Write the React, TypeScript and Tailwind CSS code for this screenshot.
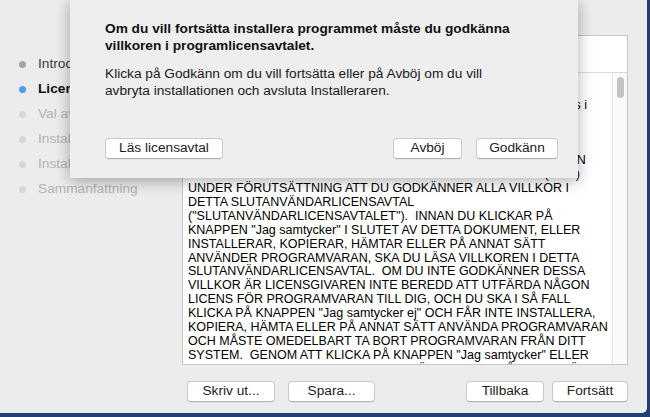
import React from "react";

const steps = [
  {label: "Introduktion", state: "done"},
  {label: "Licens", state: "current"},
  {label: "Val av målskiva", state: "todo"},
  {label: "Installationstyp", state: "todo"},
  {label: "Installation", state: "todo"},
  {label: "Sammanfattning", state: "todo"},
];

const licenseLines = [
  "SVENSKA",
  "",
  "LICENSGIVAREN GER DIG LICENS PÅ PROGRAMVARAN som finns i",
  "DETTA PAKET ENLIGT VILLKOREN I DETTA AVTAL.",
  "PROGRAMVARAN OMFATTAR ÄVEN TILLHÖRANDE",
  "TYPSNITT, BILDER, LJUD OCH ANNAT MATERIAL",
  "OCH DOKUMENTATIONEN. LICENSEN UPPLÅTS ENBART TILL DEN",
  'PERSON ELLER ENHET SOM ERHÅLLER PROGRAMVARAN ("DU")',
  "UNDER FÖRUTSÄTTNING ATT DU GODKÄNNER ALLA VILLKOR I",
  "DETTA SLUTANVÄNDARLICENSAVTAL",
  '("SLUTANVÄNDARLICENSAVTALET").  INNAN DU KLICKAR PÅ',
  'KNAPPEN "Jag samtycker" I SLUTET AV DETTA DOKUMENT, ELLER',
  "INSTALLERAR, KOPIERAR, HÄMTAR ELLER PÅ ANNAT SÄTT",
  "ANVÄNDER PROGRAMVARAN, SKA DU LÄSA VILLKOREN I DETTA",
  "SLUTANVÄNDARLICENSAVTAL.  OM DU INTE GODKÄNNER DESSA",
  "VILLKOR ÄR LICENSGIVAREN INTE BEREDD ATT UTFÄRDA NÅGON",
  "LICENS FÖR PROGRAMVARAN TILL DIG, OCH DU SKA I SÅ FALL",
  'KLICKA PÅ KNAPPEN "Jag samtycker ej" OCH FÅR INTE INSTALLERA,',
  "KOPIERA, HÄMTA ELLER PÅ ANNAT SÄTT ANVÄNDA PROGRAMVARAN",
  "OCH MÅSTE OMEDELBART TA BORT PROGRAMVARAN FRÅN DITT",
  'SYSTEM.  GENOM ATT KLICKA PÅ KNAPPEN "Jag samtycker" ELLER',
  "GENOM ATT INSTALLERA, KOPIERA, HÄMTA ELLER PÅ ANNAT SÄTT",
];

function MacButton({label, className = ""}: {label: string; className?: string}) {
  return (
    <button
      type="button"
      className={`flex h-[21px] items-center justify-center rounded-[4px] border border-[#c9c9c9] border-b-[#b4b4b4] bg-white text-[13.7px] text-[#222] shadow-[0_1px_0_rgba(0,0,0,0.04)] ${className}`}>
      {label}
    </button>
  );
}

export default function App() {
  return (
    <div className="h-[417px] w-[650px] overflow-hidden bg-[#213f6f] font-['Liberation_Sans',Arial,sans-serif]">
      <div className="relative flex h-[413px] w-[647px] flex-col rounded-br-[5px] bg-[#ececec]">
        {/* ── Window body ─────────────────────────────────────────── */}
        <div className="flex pt-[35px]">
          <aside className="flex w-[182px] flex-col pl-[19px] pt-[17px]">
            {steps.map((s) => (
              <div key={s.label} className="flex h-[25px] items-center gap-[12px]">
                <span
                  className={
                    s.state === "done"
                      ? "h-[7px] w-[7px] rounded-full bg-[#a5a5a5]"
                      : s.state === "current"
                        ? "h-[7px] w-[7px] rounded-full bg-[#4b9ff0]"
                        : "h-[7px] w-[7px] rounded-full bg-[#d6d6d6]"
                  }
                />
                <span
                  className={
                    s.state === "done"
                      ? "text-[13.7px] text-[#3c3c3c]"
                      : s.state === "current"
                        ? "text-[13.7px] font-bold text-[#111]"
                        : "text-[13.7px] text-[#b3b3b3]"
                  }>
                  {s.label}
                </span>
              </div>
            ))}
          </aside>

          <section className="flex h-[330px] w-[446px] flex-col border border-[#c6c6c6] bg-white">
            <div className="h-[37px] shrink-0 border-b border-[#dadada]" />
            <div className="flex min-h-0 flex-1">
              <div className="flex-1 overflow-hidden pl-[5px]">
                <div className="-mt-[2px] text-[12.5px] leading-[13.9px] text-black">
                  {licenseLines.map((line, i) => (
                    <div key={i} className="h-[13.9px] whitespace-pre">
                      {line}
                    </div>
                  ))}
                </div>
              </div>
              <div className="flex w-[15px] shrink-0 justify-center border-l border-[#e4e4e4] bg-[#fafafa] pt-[4px]">
                <div className="h-[21px] w-[7px] rounded-full bg-[#c3c3c3]" />
              </div>
            </div>
          </section>
        </div>

        {/* ── Bottom buttons ──────────────────────────────────────── */}
        <footer className="mt-[16px] flex items-center pl-[187px] pr-[19px]">
          <MacButton label="Skriv ut..." className="w-[88px]" />
          <MacButton label="Spara..." className="ml-[13px] w-[87px]" />
          <div className="flex-1" />
          <MacButton label="Tillbaka" className="w-[78px]" />
          <MacButton label="Fortsätt" className="ml-[8px] w-[76px]" />
        </footer>

        {/* ── Sheet ───────────────────────────────────────────────── */}
        <div className="absolute left-[70px] top-0 flex h-[178px] w-[508px] flex-col bg-[#eeeeee] px-[35px] pt-[20px] shadow-[0_3px_14px_rgba(0,0,0,0.32)]">
          <p className="text-[13.7px] font-bold leading-[17px] text-[#111]">
            Om du vill fortsätta installera programmet måste du godkänna
            <br />
            villkoren i programlicensavtalet.
          </p>
          <p className="mt-[11px] text-[13.7px] leading-[17px] text-[#1a1a1a]">
            Klicka på Godkänn om du vill fortsätta eller på Avböj om du vill
            <br />
            avbryta installationen och avsluta Installeraren.
          </p>
          <div className="mt-auto mb-[19px] flex items-center">
            <MacButton label="Läs licensavtal" className="w-[118px]" />
            <div className="flex-1" />
            <MacButton label="Avböj" className="w-[69px]" />
            <MacButton label="Godkänn" className="ml-[14px] w-[82px] -mr-[15px]" />
          </div>
        </div>
      </div>
    </div>
  );
}
